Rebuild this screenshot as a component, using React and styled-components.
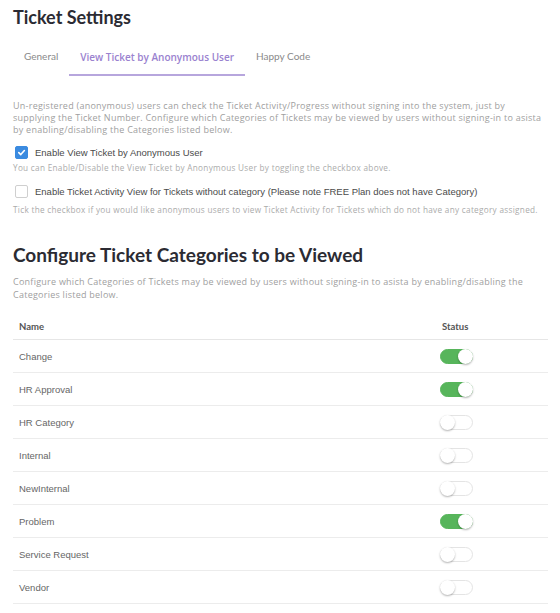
import React from 'react';
import styled, { createGlobalStyle } from 'styled-components';

const GlobalStyle = createGlobalStyle`
  body {
    margin: 0;
    background: #ffffff;
    font-family: "Open Sans", Lato, sans-serif;
  }
`;

const Page = styled.div`
  width: 560px;
  padding: 6px 12px 0 13px;
  box-sizing: border-box;
`;

const Title = styled.h1`
  margin: 0;
  font-family: Lato, sans-serif;
  font-size: 18px;
  font-weight: 700;
  color: #2b2b33;
  line-height: 22px;
`;

const Tabs = styled.div`
  display: flex;
  margin-top: 14px;
`;

const Tab = styled.div`
  padding: 8px 11px 10px;
  font-family: ${p => (p.$active ? '"Open Sans", sans-serif' : 'Lato, sans-serif')};
  font-size: 10px;
  font-weight: ${p => (p.$active ? 600 : 400)};
  color: ${p => (p.$active ? '#9a82cf' : '#8a8a8a')};
  border-bottom: 2px solid ${p => (p.$active ? '#b7a6dd' : 'transparent')};
`;

const Para = styled.p`
  margin: ${p => p.$mt || '24px'} 0 0;
  font-size: 9px;
  letter-spacing: 0.25px;
  line-height: ${p => p.$lh || '12px'};
  color: #a0a0a0;
  white-space: nowrap;
`;

const CheckRow = styled.label`
  display: flex;
  align-items: center;
  gap: 7px;
  padding-left: 2px;
  margin-top: ${p => p.$mt || '10px'};
  font-family: "Liberation Sans", Arial, sans-serif;
  font-size: 9.5px;
  color: #4a4a4a;
`;

const Box = styled.span`
  width: 13px;
  height: 13px;
  box-sizing: border-box;
  border-radius: 2px;
  display: flex;
  align-items: center;
  justify-content: center;
  background: ${p => (p.$checked ? '#3b8be0' : '#fff')};
  border: 1px solid ${p => (p.$checked ? '#3b8be0' : '#cfcfcf')};
`;

const Help = styled.div`
  margin-top: ${p => p.$mt || '3px'};
  font-size: 8.2px;
  letter-spacing: 0.3px;
  color: #ababab;
  white-space: nowrap;
`;

const Heading = styled.h2`
  margin: 28px 0 0;
  font-family: Lato, sans-serif;
  font-size: 19px;
  font-weight: 700;
  color: #2b2b33;
  line-height: 24px;
`;

const Table = styled.div`
  margin-top: 13px;
  width: 535px;
`;

const Row = styled.div`
  display: grid;
  grid-template-columns: 1fr 112px;
  align-items: center;
  height: ${p => (p.$head ? '26px' : '33px')};
  border-bottom: 1px solid ${p => (p.$head ? '#e6e6e6' : '#ececec')};
  box-sizing: border-box;
`;

const NameCell = styled.div`
  padding-left: 6px;
  font-family: "Liberation Sans", Arial, sans-serif;
  font-size: 9.5px;
  color: #666;
`;

const HeadCell = styled.div`
  padding-left: 6px;
  font-family: Lato, sans-serif;
  font-size: 9.5px;
  font-weight: 700;
  color: #555;
`;

const StatusCell = styled.div`
  padding-left: 4px;
  display: flex;
`;

const Toggle = styled.span`
  position: relative;
  width: 33px;
  height: 15px;
  border-radius: 8px;
  box-sizing: border-box;
  background: ${p => (p.$on ? '#57b55b' : '#fff')};
  border: 1px solid ${p => (p.$on ? '#57b55b' : '#e4e4e4')};

  &::after {
    content: '';
    position: absolute;
    top: -1px;
    left: ${p => (p.$on ? '17px' : '-1px')};
    width: 15px;
    height: 15px;
    border-radius: 50%;
    background: #fff;
    box-shadow: 0 1px 2px rgba(0, 0, 0, 0.3);
  }
`;

const categories = [
  { name: 'Change', on: true },
  { name: 'HR Approval', on: true },
  { name: 'HR Category', on: false },
  { name: 'Internal', on: false },
  { name: 'NewInternal', on: false },
  { name: 'Problem', on: true },
  { name: 'Service Request', on: false },
  { name: 'Vendor', on: false },
];

const Check = () => (
  <svg width="9" height="9" viewBox="0 0 10 10">
    <path d="M2 5.2 L4.2 7.3 L8.2 2.8" fill="none" stroke="#fff" strokeWidth="1.8" strokeLinecap="round" strokeLinejoin="round" />
  </svg>
);

export default function App() {
  return (
    <Page>
      <GlobalStyle />
      <Title>Ticket Settings</Title>
      <Tabs>
        <Tab>General</Tab>
        <Tab $active>View Ticket by Anonymous User</Tab>
        <Tab>Happy Code</Tab>
      </Tabs>
      <Para>
        Un-registered (anonymous) users can check the Ticket Activity/Progress without signing into the system, just by
        <br />
        supplying the Ticket Number. Configure which Categories of Tickets may be viewed by users without signing-in to asista
        <br />
        by enabling/disabling the Categories listed below.
      </Para>
      <CheckRow>
        <Box $checked><Check /></Box>
        Enable View Ticket by Anonymous User
      </CheckRow>
      <Help>You can Enable/Disable the View Ticket by Anonymous User by toggling the checkbox above.</Help>
      <CheckRow $mt="12px">
        <Box />
        Enable Ticket Activity View for Tickets without category (Please note FREE Plan does not have Category)
      </CheckRow>
      <Help $mt="6px">Tick the checkbox if you would like anonymous users to view Ticket Activity for Tickets which do not have any category assigned.</Help>
      <Heading>Configure Ticket Categories to be Viewed</Heading>
      <Para $mt="8px" $lh="13px">
        Configure which Categories of Tickets may be viewed by users without signing-in to asista by enabling/disabling the
        <br />
        Categories listed below.
      </Para>
      <Table>
        <Row $head>
          <HeadCell>Name</HeadCell>
          <HeadCell>Status</HeadCell>
        </Row>
        {categories.map(c => (
          <Row key={c.name}>
            <NameCell>{c.name}</NameCell>
            <StatusCell>
              <Toggle $on={c.on} />
            </StatusCell>
          </Row>
        ))}
      </Table>
    </Page>
  );
}
